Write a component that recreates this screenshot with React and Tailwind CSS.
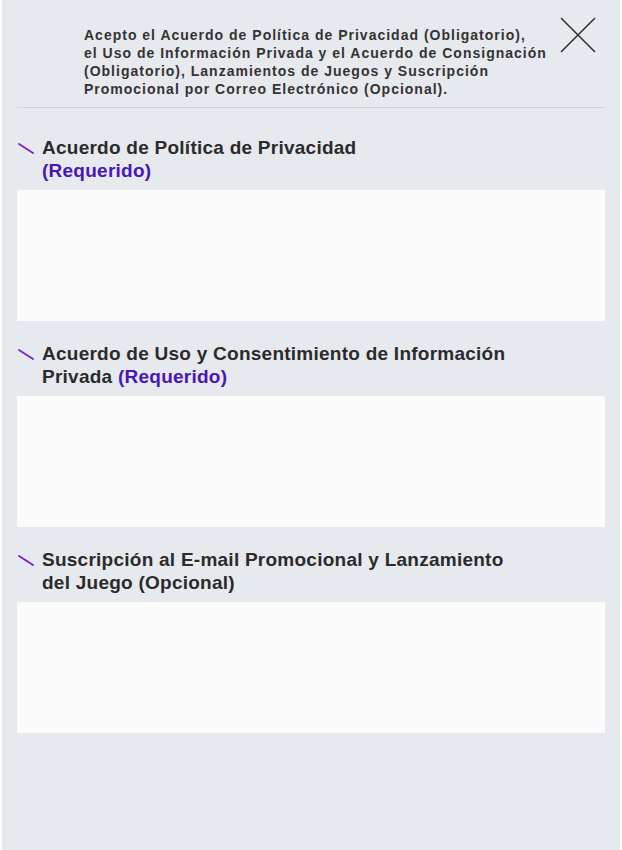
import React from "react";

const sections = [
  { lines: ["Acuerdo de Política de Privacidad"], tag: "(Requerido)", tagOwnLine: true },
  { lines: ["Acuerdo de Uso y Consentimiento de Información", "Privada"], tag: "(Requerido)" },
  { lines: ["Suscripción al E-mail Promocional y Lanzamiento", "del Juego (Opcional)"] },
];

// small purple tick in front of each section title
const Tick = () => (
  <svg width="16" height="11" viewBox="0 0 16 11" className="shrink-0 mt-[7px]">
    <line x1="1" y1="1" x2="15" y2="10" stroke="#7b1fd6" strokeWidth="1.8" strokeLinecap="round" />
  </svg>
);

export default function App() {
  return (
    <div className="min-h-[850px] bg-white px-[2px]" style={{ fontFamily: '"Liberation Sans", Arial, sans-serif' }}>
      <div className="min-h-[850px] bg-[#e6e9ee] px-[15px]">
        {/* header */}
        <div className="flex items-start pt-[17px] pb-[9px] border-b border-[#cfd1d4]">
          <p className="ml-[67px] mt-[9px] text-[14px] leading-[18px] font-bold tracking-[1px] text-[#333] whitespace-nowrap">
            Acepto el Acuerdo de Política de Privacidad (Obligatorio),<br />
            el Uso de Información Privada y el Acuerdo de Consignación<br />
            (Obligatorio), Lanzamientos de Juegos y Suscripción<br />
            Promocional por Correo Electrónico (Opcional).
          </p>
          <button className="ml-auto mr-[9px] w-[36px] h-[36px] shrink-0">
            <svg width="36" height="36" viewBox="0 0 36 36">
              <path d="M1 1 L35 35 M35 1 L1 35" stroke="#333" strokeWidth="1.6" fill="none" />
            </svg>
          </button>
        </div>

        {/* sections */}
        <div className="pt-[7px]">
          {sections.map((s, i) => (
            <div key={i} className="pt-[21px]">
              <div className="flex gap-[8px] pl-[1px]">
                <Tick />
                <h2 className="text-[19px] leading-[23px] font-bold tracking-[0.25px] text-[#2b2b2b] whitespace-nowrap">
                  {s.lines.map((l, j) => (
                    <React.Fragment key={j}>
                      {j > 0 && <br />}
                      {l}
                    </React.Fragment>
                  ))}
                  {s.tag && (s.tagOwnLine ? <br /> : " ")}
                  {s.tag && <span className="text-[#4a16b8]">{s.tag}</span>}
                </h2>
              </div>
              <div className="mt-[8px] h-[131px] bg-[#fbfbfb]"></div>
            </div>
          ))}
        </div>
      </div>
    </div>
  );
}
